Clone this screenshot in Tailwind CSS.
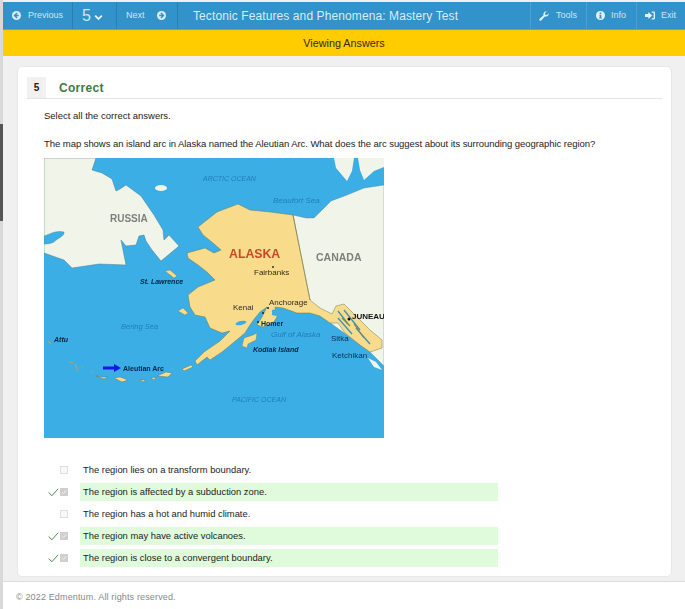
<!DOCTYPE html>
<html lang="en">
<head>
    <meta charset="UTF-8">
    <title>Tectonic Features and Phenomena: Mastery Test</title>
    <script src="https://cdn.jsdelivr.net/npm/@tailwindcss/browser@4"></script>
</head>
<body class="h-[609px] w-[685px] overflow-hidden bg-[#f1f0f0] font-['Liberation_Sans',Arial,sans-serif] text-[#222] flex">
    <!-- left rail -->
    <div class="w-[3px] shrink-0 bg-[#d9d9d9] pt-[124px]">
        <div class="h-[97px] bg-[#555]"></div>
    </div>

    <div class="flex-1 flex flex-col min-w-0">
        <!-- top nav -->
        <nav class="mt-[2px] h-[28px] shrink-0 flex bg-[#3193c9] border-b border-[#5fa8a8] text-[#cfe6f3] text-[9px]">
            <a class="w-[70px] flex items-center gap-[7px] pl-[9px] border-r border-[#2a7fb0]">
                <svg class="w-[9px] h-[9px]" viewBox="0 0 16 16"><circle cx="8" cy="8" r="8" fill="#d8ebf6"/><path d="M9 3.500 4.500 8 9 12.500M5 8h7" stroke="#3193c9" stroke-width="2.600" fill="none"/></svg>
                Previous
            </a>
            <a class="w-[44px] flex items-center pl-[9px] gap-[3px] text-[16px] border-r border-[#2a7fb0]">
                5
                <svg class="w-[9px] h-[7px] mt-[4px]" viewBox="0 0 12 8"><path d="M1.500 1.500 6 6l4.500-4.500" stroke="#e4f1f9" stroke-width="2.400" fill="none"/></svg>
            </a>
            <a class="w-[61px] flex items-center gap-[12px] pl-[9px] border-r border-[#2a7fb0]">
                Next
                <svg class="w-[9px] h-[9px]" viewBox="0 0 16 16"><circle cx="8" cy="8" r="8" fill="#d8ebf6"/><path d="M7 3.500 11.500 8 7 12.500M11 8H4" stroke="#3193c9" stroke-width="2.600" fill="none"/></svg>
            </a>
            <h1 class="flex-1 min-w-0 whitespace-nowrap pl-[15px] text-[12px] leading-[29px] tracking-[0.1px] text-[#d8ebf6]">Tectonic Features and Phenomena: Mastery Test</h1>
            <a class="w-[56px] shrink-0 flex items-center gap-[7px] pl-[8px] border-l border-[#4d9fcf]">
                <svg class="w-[10px] h-[10px]" viewBox="0 0 16 16"><path d="M15.500 4.200a4.600 4.600 0 0 1-6.100 4.400L3.600 15a1.800 1.800 0 0 1-2.600-2.500l6.300-5.800A4.600 4.600 0 0 1 12.300.6L9.500 3.400l.6 2.500 2.500.6 2.700-2.800z" fill="#e4f1f9"/></svg>
                Tools
            </a>
            <a class="w-[50px] shrink-0 flex items-center gap-[6px] pl-[9px] border-l border-[#4d9fcf]">
                <svg class="w-[9px] h-[9px]" viewBox="0 0 16 16"><circle cx="8" cy="8" r="8" fill="#e4f1f9"/><path d="M6.500 2.800h3v2.600h-3zM6 6.800h3.500v4.600h1v1.800h-5v-1.800h1V8.600H6z" fill="#3193c9"/></svg>
                Info
            </a>
            <a class="w-[49px] shrink-0 flex items-center gap-[6px] pl-[8px] border-l border-[#4d9fcf]">
                <svg class="w-[10px] h-[9px]" viewBox="0 0 18 16"><path d="M6 1.500 13 8l-7 6.500V10.500H0v-5h6zM12 1h4a2 2 0 0 1 2 2v10a2 2 0 0 1-2 2h-4v-2h3.500V3H12z" fill="#e4f1f9"/></svg>
                Exit
            </a>
        </nav>

        <!-- status banner -->
        <div class="h-[26px] shrink-0 bg-[#ffcc00] text-center text-[10.8px] leading-[26px] text-[#3a2a00]">Viewing Answers</div>

        <!-- question card -->
        <main class="mt-[10px] ml-[14px] mr-[13px] h-[511px] shrink-0 bg-white rounded-[5px] border border-[#e8e8e8] pt-[10px] pl-[9px] pr-[9px]">
            <div class="flex items-center h-[22px] border-b border-[#e4e4e4]">
                <span class="w-[19px] h-[21px] bg-[#f1f1f1] text-center text-[10px] font-bold leading-[21px]">5</span>
                <span class="ml-[13px] text-[12px] font-bold tracking-[0.3px] text-[#3f7a3f]">Correct</span>
            </div>

            <div class="pl-[17px] text-[#222]">
                <p class="mt-[9px] text-[9.500px] leading-[16px]">Select all the correct answers.</p>
                <p class="mt-[12px] text-[9.500px] leading-[16px] tracking-[-0.055px]">The map shows an island arc in Alaska named the Aleutian Arc. What does the arc suggest about its surrounding geographic region?</p>

                <svg class="block mt-[6px] w-[340px] h-[280px] blur-[0.3px]" viewBox="0 0 340 280" font-family="Liberation Sans, Arial, sans-serif">
                    <rect width="340" height="280" fill="#3baee6"/>
                    <!-- russia -->
                    <path d="M0 0H52L48 12 58 15 68 21 72 33 76 31 82 27 97 38 110 57 119 72 120 82 125 77 135 88 123 98 117 103 108 92 102 83 100 77 95 78 92 87 82 88 77 82 82 107 55 106 28 110 20 102 0 95Z" fill="#f1f5e9" stroke="#4d7f8f" stroke-width=".5"/>
                    <path d="M0 78C6 76 12 72 20 74 21 78 14 80 10 84 6 86 2 86 0 86Z" fill="#3baee6" stroke="#4d7f8f" stroke-width=".4"/>
                    <ellipse cx="117" cy="30" rx="6" ry="3" fill="#f1f5e9"/>
                    <!-- canada -->
                    <path d="M249 57 262 60 270 60 278 52 287 43 303 37 320 30 340 27V208L326 194 266 150Z" fill="#f1f5e9" stroke="#4d7f8f" stroke-width=".4"/>
                    <path d="M290 0H310L308 13 303 23 292 10Z" fill="#f1f5e9"/>
                    <path d="M314 0H340V9L330 13 320 22 316 12Z" fill="#f1f5e9"/>
                    <path d="M324 200 332 204 338 212 330 209Z" fill="#f1f5e9"/>
                    <!-- alaska -->
                    <path d="M194 46 206 52 226 54 249 57 266 142 276 150 288 156 292 148 300 146 312 158 326 172 338 182 338 190 326 194 316 187 301 175 294 165 286 165 276 158 266 155 253 155 239 150 231 149 233 159 229 165 219 169 213 167 218 159 223 149 216 154 211 160 206 167 201 175 189 185 178 194 166 202 163 199 153 207 151 203 160 194 176 183 186 173 178 175 166 170 161 159 151 157 146 149 144 137 154 129 171 122 163 114 154 107 144 100 143 95 161 90 170 95 177 92 169 85 159 77 154 69 173 54 186 49Z" fill="#f8dc8c" stroke="#6a7a55" stroke-width=".5" stroke-linejoin="round"/>
                    <path d="M249 57 266 142" stroke="#8b7a4a" stroke-width=".6" fill="none"/>
                    <ellipse cx="197" cy="165" rx="5.500" ry="2" fill="#3baee6" transform="rotate(-12 197 165)"/>
                    <path d="M228 152 236 150 232 158 228 157Z" fill="#3baee6"/>
                    <!-- panhandle inlets -->
                    <path d="M294 153 304 166M300 152 316 172M312 170 326 186M294 160 308 176" stroke="#3c8fb8" stroke-width="1.300" fill="none"/>
                    <path d="M298 160 306 168M310 166 320 180" stroke="#7c8a5a" stroke-width="1.200" fill="none"/>
                    <!-- islands -->
                    <path d="M198 188 200 180 209 177 213 175 212 182 204 186 203 190Z" fill="#f8dc8c" stroke="#6a7a55" stroke-width=".4"/>
                    <path d="M134 153 139 150 144 155 141 157Z" fill="#f8dc8c" stroke="#6a7a55" stroke-width=".4"/>
                    <path d="M121 113 126 112 133 118 130 120Z" fill="#f8dc8c" stroke="#6a7a55" stroke-width=".4"/>
                    <!-- aleutian chain -->
                    <path d="M138 211 147 207 149 209 140 213ZM113 218 122 214 128 215 124 219ZM107 220 112 219 110 222ZM96 222 102 222 99 224ZM70 220 76 219 84 222 78 224ZM52 218 58 219 64 219 60 221Z" fill="#f8dc8c" stroke="#5b7a6a" stroke-width=".5"/>
                    <path d="M25 204 29 205M31 206 34 213M4 183 7 186M38 209 39 209M47 213 48 214" stroke="#9aa57a" stroke-width="1.500" fill="none"/>
                    <!-- arrow -->
                    <path d="M59 208.500H70V206L77 210 70 214V211.500H59Z" fill="#1717e0"/>
                    <!-- labels -->
                    <g font-style="italic" fill="#1f7ebd">
                        <text x="159" y="23" font-size="7">ARCTIC OCEAN</text>
                        <text x="229" y="45" font-size="8">Beaufort Sea</text>
                        <text x="77" y="171" font-size="7.500">Bering Sea</text>
                        <text x="227" y="179" font-size="8">Gulf of Alaska</text>
                        <text x="188" y="244" font-size="7">PACIFIC OCEAN</text>
                    </g>
                    <g font-weight="700" fill="#7d807c">
                        <text x="66" y="64" font-size="10">RUSSIA</text>
                        <text x="272" y="103" font-size="10.500">CANADA</text>
                    </g>
                    <text x="185" y="100" font-weight="700" font-size="12.300" fill="#c9472a">ALASKA</text>
                    <circle cx="229" cy="109" r="1" fill="#333"/>
                    <g font-size="8" fill="#2e2a1a">
                        <text x="210" y="117">Fairbanks</text>
                        <text x="189" y="152">Kenai</text>
                        <text x="225" y="147">Anchorage</text>
                    </g>
                    <g font-size="7" font-weight="700" fill="#06233f">
                        <text x="96" y="126" font-style="italic">St. Lawrence</text>
                        <text x="10" y="184" font-style="italic">Attu</text>
                        <text x="79" y="213">Aleutian Arc</text>
                        <text x="209" y="194" font-style="italic">Kodiak Island</text>
                        <text x="217" y="168">Homer</text>
                    </g>
                    <text x="308" y="161" font-size="8" font-weight="700" fill="#111">JUNEAU</text>
                    <g font-size="8" fill="#0d2f4d">
                        <text x="287" y="183">Sitka</text>
                        <text x="288" y="200">Ketchikan</text>
                    </g>
                    <circle cx="305" cy="161" r="1.500" fill="#111"/>
                    <circle cx="219" cy="155" r="1" fill="#222"/>
                    <circle cx="224" cy="150" r="1" fill="#222"/>
                    <circle cx="214" cy="164" r="1" fill="#222"/>
                </svg>

                <!-- answers -->
                <ul class="mt-[23px] pl-[4px] flex flex-col gap-[4px] text-[9.400px]">
                    <li class="flex items-center h-[18px]">
                        <span class="w-[12px]"></span>
                        <span class="w-[8px] h-[8px] mt-[-1px] mr-[12px] border border-[#e0e0e0] bg-[#f8f8f8]"></span>
                        <span class="w-[418px] pl-[3px] leading-[18px]">The region lies on a transform boundary.</span>
                    </li>
                    <li class="flex items-center h-[18px]">
                        <svg class="w-[11px] h-[9px] mr-[1px]" viewBox="0 0 11 9"><path d="M.8 4.500 3.800 7.800 10.200.8" stroke="#4a8a4a" stroke-width="1" fill="none"/></svg>
                        <span class="w-[8px] h-[8px] mt-[-1px] mr-[12px] bg-[#cfcfcf] flex items-center justify-center">
                            <svg class="w-[6px] h-[6px]" viewBox="0 0 8 8"><path d="M1 4 3.300 6.300 7 1.500" stroke="#efefef" stroke-width="1.200" fill="none"/></svg>
                        </span>
                        <span class="w-[418px] pl-[3px] leading-[18px] bg-[#e0fbdc]">The region is affected by a subduction zone.</span>
                    </li>
                    <li class="flex items-center h-[18px]">
                        <span class="w-[12px]"></span>
                        <span class="w-[8px] h-[8px] mt-[-1px] mr-[12px] border border-[#e0e0e0] bg-[#f8f8f8]"></span>
                        <span class="w-[418px] pl-[3px] leading-[18px]">The region has a hot and humid climate.</span>
                    </li>
                    <li class="flex items-center h-[18px]">
                        <svg class="w-[11px] h-[9px] mr-[1px]" viewBox="0 0 11 9"><path d="M.8 4.500 3.800 7.800 10.200.8" stroke="#4a8a4a" stroke-width="1" fill="none"/></svg>
                        <span class="w-[8px] h-[8px] mt-[-1px] mr-[12px] bg-[#cfcfcf] flex items-center justify-center">
                            <svg class="w-[6px] h-[6px]" viewBox="0 0 8 8"><path d="M1 4 3.300 6.300 7 1.500" stroke="#efefef" stroke-width="1.200" fill="none"/></svg>
                        </span>
                        <span class="w-[418px] pl-[3px] leading-[18px] bg-[#e0fbdc]">The region may have active volcanoes.</span>
                    </li>
                    <li class="flex items-center h-[18px]">
                        <svg class="w-[11px] h-[9px] mr-[1px]" viewBox="0 0 11 9"><path d="M.8 4.500 3.800 7.800 10.200.8" stroke="#4a8a4a" stroke-width="1" fill="none"/></svg>
                        <span class="w-[8px] h-[8px] mt-[-1px] mr-[12px] bg-[#cfcfcf] flex items-center justify-center">
                            <svg class="w-[6px] h-[6px]" viewBox="0 0 8 8"><path d="M1 4 3.300 6.300 7 1.500" stroke="#efefef" stroke-width="1.200" fill="none"/></svg>
                        </span>
                        <span class="w-[418px] pl-[3px] leading-[18px] bg-[#e0fbdc]">The region is close to a convergent boundary.</span>
                    </li>
                </ul>
            </div>
        </main>

        <!-- footer -->
        <footer class="mt-[4px] flex-1 bg-white border-t border-[#dcdcdc] pl-[13px] text-[9px] leading-[31px] tracking-[0.15px] text-[#888]">© 2022 Edmentum. All rights reserved.</footer>
    </div>
</body>
</html>
